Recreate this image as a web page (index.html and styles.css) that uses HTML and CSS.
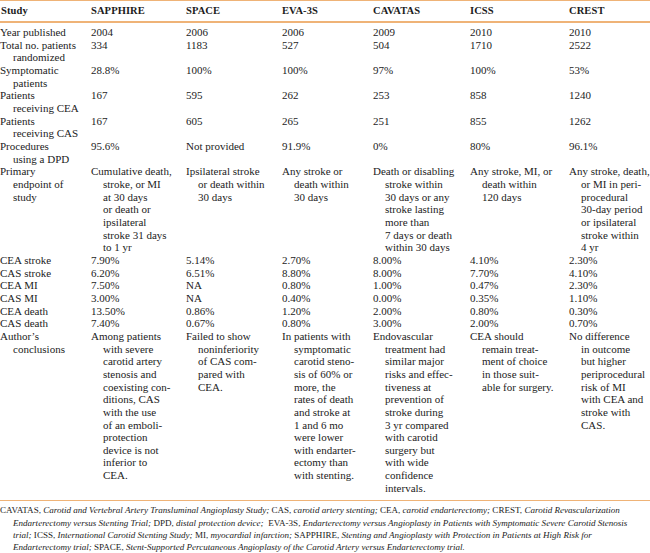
FILE: index.html
```html
<!DOCTYPE html>
<html>
<head>
<meta charset="utf-8">
<link rel="stylesheet" href="styles.css">
</head>
<body>
<table class="trials">
<colgroup>
<col class="c-study"><col class="c-sapphire"><col class="c-space"><col class="c-eva"><col class="c-cavatas"><col class="c-icss"><col class="c-crest">
</colgroup>
<thead>
<tr><th>Study</th><th>SAPPHIRE</th><th>SPACE</th><th>EVA-3S</th><th>CAVATAS</th><th>ICSS</th><th>CREST</th></tr>
</thead>
<tbody>
<tr class="first"><td>Year published</td><td>2004</td><td>2006</td><td>2006</td><td>2009</td><td>2010</td><td>2010</td></tr>
<tr><td>Total no. patients<br>randomized</td><td>334</td><td>1183</td><td>527</td><td>504</td><td>1710</td><td>2522</td></tr>
<tr><td>Symptomatic<br>patients</td><td>28.8%</td><td>100%</td><td>100%</td><td>97%</td><td>100%</td><td>53%</td></tr>
<tr><td>Patients<br>receiving CEA</td><td>167</td><td>595</td><td>262</td><td>253</td><td>858</td><td>1240</td></tr>
<tr><td>Patients<br>receiving CAS</td><td>167</td><td>605</td><td>265</td><td>251</td><td>855</td><td>1262</td></tr>
<tr><td>Procedures<br>using a DPD</td><td>95.6%</td><td>Not provided</td><td>91.9%</td><td>0%</td><td>80%</td><td>96.1%</td></tr>
<tr><td>Primary<br>endpoint of<br>study</td>
<td>Cumulative death,<br>stroke, or MI<br>at 30 days<br>or death or<br>ipsilateral<br>stroke 31 days<br>to 1 yr</td>
<td>Ipsilateral stroke<br>or death within<br>30 days</td>
<td>Any stroke or<br>death within<br>30 days</td>
<td>Death or disabling<br>stroke within<br>30 days or any<br>stroke lasting<br>more than<br>7 days or death<br>within 30 days</td>
<td>Any stroke, MI, or<br>death within<br>120 days</td>
<td>Any stroke, death,<br>or MI in peri-<br>procedural<br>30-day period<br>or ipsilateral<br>stroke within<br>4 yr</td></tr>
<tr><td>CEA stroke</td><td>7.90%</td><td>5.14%</td><td>2.70%</td><td>8.00%</td><td>4.10%</td><td>2.30%</td></tr>
<tr><td>CAS stroke</td><td>6.20%</td><td>6.51%</td><td>8.80%</td><td>8.00%</td><td>7.70%</td><td>4.10%</td></tr>
<tr><td>CEA MI</td><td>7.50%</td><td>NA</td><td>0.80%</td><td>1.00%</td><td>0.47%</td><td>2.30%</td></tr>
<tr><td>CAS MI</td><td>3.00%</td><td>NA</td><td>0.40%</td><td>0.00%</td><td>0.35%</td><td>1.10%</td></tr>
<tr><td>CEA death</td><td>13.50%</td><td>0.86%</td><td>1.20%</td><td>2.00%</td><td>0.80%</td><td>0.30%</td></tr>
<tr><td>CAS death</td><td>7.40%</td><td>0.67%</td><td>0.80%</td><td>3.00%</td><td>2.00%</td><td>0.70%</td></tr>
<tr class="last"><td>Author’s<br>conclusions</td>
<td>Among patients<br>with severe<br>carotid artery<br>stenosis and<br>coexisting con-<br>ditions, CAS<br>with the use<br>of an emboli-<br>protection<br>device is not<br>inferior to<br>CEA.</td>
<td>Failed to show<br>noninferiority<br>of CAS com-<br>pared with<br>CEA.</td>
<td>In patients with<br>symptomatic<br>carotid steno-<br>sis of 60% or<br>more, the<br>rates of death<br>and stroke at<br>1 and 6 mo<br>were lower<br>with endarter-<br>ectomy than<br>with stenting.</td>
<td>Endovascular<br>treatment had<br>similar major<br>risks and effec-<br>tiveness at<br>prevention of<br>stroke during<br>3 yr compared<br>with carotid<br>surgery but<br>with wide<br>confidence<br>intervals.</td>
<td>CEA should<br>remain treat-<br>ment of choice<br>in those suit-<br>able for surgery.</td>
<td>No difference<br>in outcome<br>but higher<br>periprocedural<br>risk of MI<br>with CEA and<br>stroke with<br>CAS.</td></tr>
</tbody>
</table>
<p class="notes">CAVATAS, <i>Carotid and Vertebral Artery Transluminal Angioplasty Study;</i> CAS, <i>carotid artery stenting;</i> CEA, <i>carotid endarterectomy;</i> CREST, <i>Carotid Revascularization</i><br><i>Endarterectomy versus Stenting Trial;</i> DPD, <i>distal protection device;</i>&nbsp; EVA-3S, <i>Endarterectomy versus Angioplasty in Patients with Symptomatic Severe Carotid Stenosis</i><br><i>trial;</i> ICSS, <i>International Carotid Stenting Study;</i> MI, <i>myocardial infarction;</i> SAPPHIRE, <i>Stenting and Angioplasty with Protection in Patients at High Risk for</i><br><i>Endarterectomy trial;</i> SPACE, <i>Stent-Supported Percutaneous Angioplasty of the Carotid Artery versus Endarterectomy trial.</i></p>
</body>
</html>
```
FILE: styles.css
```css
html, body {
  margin: 0;
  padding: 0;
  background: #ffffff;
}
body {
  width: 650px;
  font-family: "Liberation Serif", "Times New Roman", serif;
  color: #1c1c1c;
}
.trials {
  width: 650px;
  border-collapse: collapse;
  table-layout: fixed;
  border-top: 1.5px solid #efb377;
}
.c-study { width: 90px; }
.c-sapphire { width: 95px; }
.c-space { width: 96px; }
.c-eva { width: 91px; }
.c-cavatas { width: 97px; }
.c-icss { width: 99px; }
.c-crest { width: 82px; }
.trials th {
  font-size: 10.5px;
  font-weight: bold;
  text-align: left;
  line-height: 12.65px;
  padding: 4px 0 3.5px 1px;
  border-bottom: 2px solid #efb377;
  letter-spacing: 0.1px;
}
.trials td {
  font-size: 11px;
  line-height: 12.65px;
  vertical-align: top;
  padding: 0 0 0 13px;
  text-indent: -12px;
  white-space: nowrap;
}
.trials td:first-child {
  padding-left: 13px;
  text-indent: -13px;
}
.trials tr.first td {
  padding-top: 3px;
}
.trials tr.last td {
  padding-bottom: 6px;
}
.notes {
  margin: 0;
  border-top: 1.5px solid #efb377;
  padding: 3px 0 0 13px;
  text-indent: -13px;
  font-size: 9.05px;
  line-height: 12.3px;
  white-space: nowrap;
}
.notes i {
  font-style: italic;
}
```
